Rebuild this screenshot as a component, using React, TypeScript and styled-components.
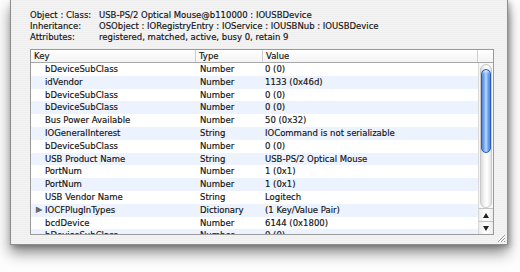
import React from "react";
import styled, { createGlobalStyle } from "styled-components";

const GlobalStyle = createGlobalStyle`
  html, body {
    margin: 0;
    padding: 0;
    background: #fdfdfd;
  }
  body {
    font-family: "DejaVu Sans", "Liberation Sans", sans-serif;
    font-size: 8.5px;
    color: #111;
    -webkit-text-stroke: 0.15px #111;
  }
`;

const Page = styled.div`
  width: 520px;
  height: 272px;
  overflow: hidden;
  padding-left: 10px;
  box-sizing: border-box;
  background: #fdfdfd;
`;

const Window = styled.div`
  width: 498px;
  height: 245px;
  box-sizing: border-box;
  border: 1px solid #8c8c8c;
  border-top: none;
  background: repeating-linear-gradient(
    to bottom,
    #eeeeee 0px,
    #eeeeee 1px,
    #f4f4f4 1px,
    #f4f4f4 2px
  );
  box-shadow: 0 8px 13px rgba(0, 0, 0, 0.45), 2px 2px 5px rgba(0, 0, 0, 0.25);
  display: flex;
  flex-direction: column;
  padding: 10px 14px 0 19px;
  position: relative;
`;

const InfoGrid = styled.div`
  display: grid;
  grid-template-columns: 69px auto;
  line-height: 11px;
  white-space: nowrap;
`;

const Label = styled.div``;
const Value = styled.div``;

const Table = styled.div`
  margin-top: 6px;
  width: 464px;
  height: 186px;
  box-sizing: border-box;
  border: 1px solid #9a9a9a;
  background: #fff;
  display: flex;
  flex-direction: column;
  overflow: hidden;
`;

const HeaderRow = styled.div`
  display: grid;
  grid-template-columns: 165px 67px 215px 15px;
  height: 12px;
  border-bottom: 1px solid #a8a8a8;
  background: linear-gradient(to bottom, #ffffff, #f3f3f3);
  flex: none;
`;

const HeaderCell = styled.div<{ last?: boolean }>`
  line-height: 12px;
  padding-left: 3px;
  border-right: ${(p) => (p.last ? "none" : "1px solid #cfcfcf")};
  white-space: nowrap;
`;

const Body = styled.div`
  flex: 1;
  display: flex;
  min-height: 0;
`;

const Rows = styled.div`
  flex: 1;
  overflow: hidden;
`;

const Row = styled.div<{ alt: boolean }>`
  display: grid;
  grid-template-columns: 165px 67px 215px;
  height: 12.8px;
  line-height: 12.8px;
  background: ${(p) => (p.alt ? "#edf3fe" : "#ffffff")};
  white-space: nowrap;
`;

const KeyCell = styled.div`
  display: flex;
  align-items: center;
  padding-left: 5px;
`;

const Disclosure = styled.span<{ show: boolean }>`
  width: 9px;
  color: #6a6a6a;
  font-size: 8px;
  visibility: ${(p) => (p.show ? "visible" : "hidden")};
`;

const TypeCell = styled.div`
  padding-left: 4px;
`;

const ValueCell = styled.div`
  padding-left: 2px;
`;

const Scroller = styled.div`
  width: 15px;
  flex: none;
  display: flex;
  flex-direction: column;
  align-items: center;
  border-left: 1px solid #d8d8d8;
  box-sizing: border-box;
  background: #f7f7f7;
`;

const Track = styled.div`
  flex: 1;
  width: 12px;
  margin-top: 1px;
  border-radius: 6px;
  background: linear-gradient(to right, #dcdcdc, #f9f9f9 40%, #ffffff 60%, #e3e3e3);
  border: 1px solid #c9c9c9;
  box-sizing: border-box;
  display: flex;
  flex-direction: column;
  align-items: center;
`;

const Thumb = styled.div`
  margin-top: 4px;
  width: 10px;
  height: 84px;
  border-radius: 5px;
  box-sizing: border-box;
  border: 1px solid #2a5bb8;
  background: linear-gradient(
    to right,
    #3f74d8 0%,
    #7fb1f3 30%,
    #b7dcff 50%,
    #6ea5ef 75%,
    #3a6fd4 100%
  );
  box-shadow: inset 0 2px 2px rgba(255, 255, 255, 0.5);
`;

const ArrowButton = styled.div`
  width: 14px;
  height: 12px;
  flex: none;
  display: flex;
  align-items: center;
  justify-content: center;
  border-top: 1px solid #c4c4c4;
  background: linear-gradient(to right, #ececec, #ffffff 50%, #ececec);
`;

const ResizeGrip = styled.svg`
  position: absolute;
  right: 1px;
  bottom: 1px;
`;

type Entry = { key: string; type: string; value: string; expandable?: boolean };

const entries: Entry[] = [
  { key: "bDeviceSubClass", type: "Number", value: "0 (0)" },
  { key: "idVendor", type: "Number", value: "1133 (0x46d)" },
  { key: "bDeviceSubClass", type: "Number", value: "0 (0)" },
  { key: "bDeviceSubClass", type: "Number", value: "0 (0)" },
  { key: "Bus Power Available", type: "Number", value: "50 (0x32)" },
  { key: "IOGeneralInterest", type: "String", value: "IOCommand is not serializable" },
  { key: "bDeviceSubClass", type: "Number", value: "0 (0)" },
  { key: "USB Product Name", type: "String", value: "USB-PS/2 Optical Mouse" },
  { key: "PortNum", type: "Number", value: "1 (0x1)" },
  { key: "PortNum", type: "Number", value: "1 (0x1)" },
  { key: "USB Vendor Name", type: "String", value: "Logitech" },
  { key: "IOCFPlugInTypes", type: "Dictionary", value: "(1 Key/Value Pair)", expandable: true },
  { key: "bcdDevice", type: "Number", value: "6144 (0x1800)" },
  { key: "bDeviceSubClass", type: "Number", value: "0 (0)" },
];

function Arrow({ up }: { up?: boolean }) {
  return (
    <svg width="6" height="5" viewBox="0 0 6 5">
      <path d={up ? "M3 0 L6 5 L0 5 Z" : "M0 0 L6 0 L3 5 Z"} fill="#222" />
    </svg>
  );
}

export default function App() {
  return (
    <Page>
      <GlobalStyle />
      <Window>
        <InfoGrid>
          <Label>Object : Class:</Label>
          <Value>USB-PS/2 Optical Mouse@b110000 : IOUSBDevice</Value>
          <Label>Inheritance:</Label>
          <Value>OSObject : IORegistryEntry : IOService : IOUSBNub : IOUSBDevice</Value>
          <Label>Attributes:</Label>
          <Value>registered, matched, active, busy 0, retain 9</Value>
        </InfoGrid>
        <Table>
          <HeaderRow>
            <HeaderCell>Key</HeaderCell>
            <HeaderCell>Type</HeaderCell>
            <HeaderCell>Value</HeaderCell>
            <HeaderCell last />
          </HeaderRow>
          <Body>
            <Rows>
              {entries.map((e, i) => (
                <Row key={i} alt={i % 2 === 1}>
                  <KeyCell>
                    <Disclosure show={!!e.expandable}>▶</Disclosure>
                    {e.key}
                  </KeyCell>
                  <TypeCell>{e.type}</TypeCell>
                  <ValueCell>{e.value}</ValueCell>
                </Row>
              ))}
            </Rows>
            <Scroller>
              <Track>
                <Thumb />
              </Track>
              <ArrowButton>
                <Arrow up />
              </ArrowButton>
              <ArrowButton>
                <Arrow />
              </ArrowButton>
            </Scroller>
          </Body>
        </Table>
        <ResizeGrip width="10" height="10" viewBox="0 0 10 10">
          <path d="M9 2 L2 9 M9 5 L5 9 M9 8 L8 9" stroke="#9a9a9a" strokeWidth="1" />
          <path d="M9 3 L3 9 M9 6 L6 9" stroke="#ffffff" strokeWidth="1" />
        </ResizeGrip>
      </Window>
    </Page>
  );
}
